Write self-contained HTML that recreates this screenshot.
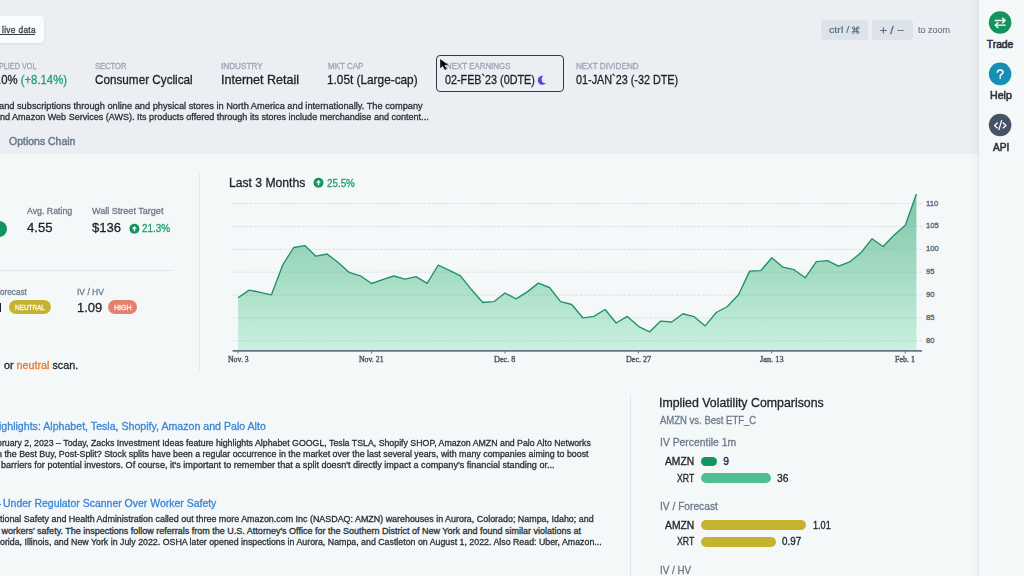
<!DOCTYPE html>
<html><head><meta charset='utf-8'><style>
html,body{margin:0;padding:0;width:1024px;height:576px;overflow:hidden;background:#f4f8f9;font-family:"Liberation Sans", sans-serif;}
div{-webkit-text-stroke:0.3px currentColor;}
body{position:relative;}
</style></head><body>

<div style='position:absolute;left:0;top:0;width:978px;height:153.8px;background:#ebeef2'></div>
<div style='position:absolute;left:978px;top:0;width:46px;height:576px;background:#f4f8f9;border-left:1.5px solid #e0e4e9;box-sizing:border-box;box-shadow:-4px 0 6px rgba(40,50,70,0.035)'></div>
<div style='position:absolute;left:-10px;top:16px;width:54px;height:26.6px;background:#fafbfc;border-radius:4px;box-shadow:0 1px 3px rgba(30,40,60,0.10)'></div>
<div style='position:absolute;left:0;top:34.0px;width:35.4px;height:0.8px;background:#3a3f47'></div>
<div style='position:absolute;left:436.25px;top:54.7px;width:127.65px;height:37.2px;border:1.7px solid #343a46;border-radius:4px;box-sizing:border-box'></div>
<div style='position:absolute;left:820.5px;top:20.2px;width:47.8px;height:19.7px;background:#dce3ea;border-radius:3.5px'></div>
<div style='position:absolute;left:872px;top:20.2px;width:40.8px;height:19.7px;background:#dce3ea;border-radius:3.5px'></div>
<div style='position:absolute;left:199px;top:174px;width:1px;height:196.4px;background:#e3e6ea'></div>
<div style='position:absolute;left:0;top:270.4px;width:173.7px;height:1px;background:#e3e7eb'></div>
<div style='position:absolute;left:630px;top:393.6px;width:1px;height:183px;background:#e3e6ea'></div>
<div style='position:absolute;left:-9.6px;top:220.6px;width:16.6px;height:16.6px;border-radius:50%;background:#13935f'></div>
<div style='position:absolute;left:0;top:503.6px;width:1.2px;height:1px;background:#3a86d5'></div>
<div style='position:absolute;left:0;top:302.6px;width:1.3px;height:9.3px;background:#1d2027'></div>
<div style='position:absolute;left:8.8px;top:300.1px;width:42.5px;height:14.4px;border-radius:8px;background:#c5b22f'></div>
<div style='position:absolute;left:108.1px;top:300.1px;width:29.4px;height:14.4px;border-radius:8px;background:#e5806e'></div>
<div style='position:absolute;left:701.3px;top:456.5px;width:16.1px;height:9.1px;border-radius:5px;background:#12945f'></div>
<div style='position:absolute;left:701.3px;top:473px;width:69.3px;height:9.7px;border-radius:5px;background:#4fbf93'></div>
<div style='position:absolute;left:701.2px;top:520.1px;width:104.9px;height:9.9px;border-radius:5px;background:#c5b22e'></div>
<div style='position:absolute;left:701.2px;top:536.8px;width:74.6px;height:10.1px;border-radius:5px;background:#c5b22e'></div>

<svg width='1024' height='576' style='position:absolute;left:0;top:0'>
<defs><linearGradient id='g' x1='0' y1='194' x2='0' y2='350.5' gradientUnits='userSpaceOnUse'>
<stop offset='0' stop-color='#7fc5a7'/><stop offset='1' stop-color='#c9f1df'/></linearGradient></defs>
<path d='M238.10,350.5 L238.10,297.80 L249.22,290.10 L260.34,292.30 L271.46,294.80 L282.58,265.20 L293.70,247.50 L304.82,245.60 L315.94,256.20 L327.06,254.00 L338.18,262.50 L349.30,272.40 L360.42,275.80 L371.54,283.50 L382.66,279.70 L393.78,276.00 L404.90,279.20 L416.02,276.70 L427.14,283.40 L438.26,265.00 L449.38,270.30 L460.50,275.80 L471.62,289.80 L482.74,302.50 L493.86,301.70 L504.98,293.00 L516.10,298.90 L527.22,291.90 L538.34,283.10 L549.46,287.50 L560.58,301.70 L571.70,304.50 L582.82,317.80 L593.94,316.40 L605.06,309.50 L616.18,323.00 L627.30,316.40 L638.42,326.30 L649.54,331.90 L660.66,321.10 L671.78,322.00 L682.90,313.75 L694.02,316.60 L705.14,325.90 L716.26,312.50 L727.38,306.50 L738.50,294.70 L749.62,271.10 L760.74,270.60 L771.86,257.80 L782.98,267.20 L794.10,269.70 L805.22,277.80 L816.34,261.70 L827.46,260.60 L838.58,266.10 L849.70,261.90 L860.82,252.80 L871.94,238.80 L883.06,246.50 L894.18,235.00 L905.30,225.30 L916.42,194.00 L916.42,350.5 Z' fill='url(#g)'/>
<g><line x1='232' x2='922' y1='203.60' y2='203.60' stroke='rgba(110,120,150,0.19)' stroke-width='1' stroke-dasharray='2.9 1.45'/><line x1='232' x2='922' y1='226.47' y2='226.47' stroke='rgba(110,120,150,0.19)' stroke-width='1' stroke-dasharray='2.9 1.45'/><line x1='232' x2='922' y1='249.34' y2='249.34' stroke='rgba(110,120,150,0.19)' stroke-width='1' stroke-dasharray='2.9 1.45'/><line x1='232' x2='922' y1='272.21' y2='272.21' stroke='rgba(110,120,150,0.19)' stroke-width='1' stroke-dasharray='2.9 1.45'/><line x1='232' x2='922' y1='295.08' y2='295.08' stroke='rgba(110,120,150,0.19)' stroke-width='1' stroke-dasharray='2.9 1.45'/><line x1='232' x2='922' y1='317.95' y2='317.95' stroke='rgba(110,120,150,0.19)' stroke-width='1' stroke-dasharray='2.9 1.45'/><line x1='232' x2='922' y1='340.82' y2='340.82' stroke='rgba(110,120,150,0.19)' stroke-width='1' stroke-dasharray='2.9 1.45'/></g>
<polyline points='238.10,297.80 249.22,290.10 260.34,292.30 271.46,294.80 282.58,265.20 293.70,247.50 304.82,245.60 315.94,256.20 327.06,254.00 338.18,262.50 349.30,272.40 360.42,275.80 371.54,283.50 382.66,279.70 393.78,276.00 404.90,279.20 416.02,276.70 427.14,283.40 438.26,265.00 449.38,270.30 460.50,275.80 471.62,289.80 482.74,302.50 493.86,301.70 504.98,293.00 516.10,298.90 527.22,291.90 538.34,283.10 549.46,287.50 560.58,301.70 571.70,304.50 582.82,317.80 593.94,316.40 605.06,309.50 616.18,323.00 627.30,316.40 638.42,326.30 649.54,331.90 660.66,321.10 671.78,322.00 682.90,313.75 694.02,316.60 705.14,325.90 716.26,312.50 727.38,306.50 738.50,294.70 749.62,271.10 760.74,270.60 771.86,257.80 782.98,267.20 794.10,269.70 805.22,277.80 816.34,261.70 827.46,260.60 838.58,266.10 849.70,261.90 860.82,252.80 871.94,238.80 883.06,246.50 894.18,235.00 905.30,225.30 916.42,194.00' fill='none' stroke='#1f9169' stroke-width='1.35' stroke-linejoin='round'/>
<line x1='232.5' x2='922' y1='350.9' y2='350.9' stroke='#6b7483' stroke-width='1.6'/>
<line x1='238.1' x2='238.1' y1='350' y2='353.5' stroke='#6b7483' stroke-width='1'/><line x1='371.6' x2='371.6' y1='350' y2='353.5' stroke='#6b7483' stroke-width='1'/><line x1='505.0' x2='505.0' y1='350' y2='353.5' stroke='#6b7483' stroke-width='1'/><line x1='638.3' x2='638.3' y1='350' y2='353.5' stroke='#6b7483' stroke-width='1'/><line x1='771.7' x2='771.7' y1='350' y2='353.5' stroke='#6b7483' stroke-width='1'/><line x1='905.3' x2='905.3' y1='350' y2='353.5' stroke='#6b7483' stroke-width='1'/>
</svg>

<svg width='1024' height='576' style='position:absolute;left:0;top:0'>
<defs><mask id='moon'><rect x='530' y='70' width='25' height='20' fill='#fff'/><circle cx='545.6' cy='79.2' r='3.9' fill='#000'/></mask></defs>
<path d='M854.50 27.80 V32.30 M856.70 27.80 V32.30 M853.35 28.95 H857.85 M853.35 31.15 H857.85' stroke='#5f6b7b' stroke-width='0.95' fill='none'/><circle cx='853.35' cy='27.80' r='1.15' stroke='#5f6b7b' stroke-width='0.95' fill='none'/><circle cx='853.35' cy='32.30' r='1.15' stroke='#5f6b7b' stroke-width='0.95' fill='none'/><circle cx='857.85' cy='27.80' r='1.15' stroke='#5f6b7b' stroke-width='0.95' fill='none'/><circle cx='857.85' cy='32.30' r='1.15' stroke='#5f6b7b' stroke-width='0.95' fill='none'/>
<circle cx='1000.1' cy='22.5' r='11.3' fill='#14935f'/>
<path d='M995.2 20.5 H1005.2 M1002.5 18.1 L1005.2 20.5 L1002.5 22.9' stroke='#fff' stroke-width='1.3' fill='none' stroke-linecap='round' stroke-linejoin='round'/>
<path d='M1005.2 25.2 H995.2 M997.9 22.8 L995.2 25.2 L997.9 27.6' stroke='#fff' stroke-width='1.3' fill='none' stroke-linecap='round' stroke-linejoin='round'/>
<circle cx='1000.1' cy='73.9' r='11.3' fill='#1590b2'/>
<path d='M997.4 72.2 C997.4 70.6 998.6 69.9 1000.2 69.9 C1001.9 69.9 1003.0 70.9 1003.0 72.2 C1003.0 73.7 1001.6 74.2 1000.8 74.9 C1000.3 75.3 1000.2 75.8 1000.2 76.4' stroke='#fff' stroke-width='1.5' fill='none' stroke-linecap='round'/>
<circle cx='1000.2' cy='78.1' r='0.85' fill='#fff'/>
<circle cx='1000.1' cy='125.0' r='11.3' fill='#465366'/>
<path d='M997.4 122.9 L994.5 125.4 L997.4 127.9 M1003.1 122.9 L1006.0 125.4 L1003.1 127.9 M1001.6 120.6 L998.9 129.6' stroke='#fff' stroke-width='1.3' fill='none' stroke-linecap='round' stroke-linejoin='round'/>
<circle cx='134.4' cy='228.7' r='5.0' fill='#12965f'/>
<path d='M132.0 228.7 L134.4 226.0 L136.8 228.7 Z' fill='#fff'/><rect x='133.7' y='228.2' width='1.4' height='3.0' fill='#fff'/>
<circle cx='318.5' cy='182.8' r='5.0' fill='#12965f'/>
<path d='M316.1 182.8 L318.5 180.1 L320.9 182.8 Z' fill='#fff'/><rect x='317.8' y='182.3' width='1.4' height='3.0' fill='#fff'/>
<circle cx='542.2' cy='80.3' r='4.45' fill='#5147e6' mask='url(#moon)'/>
</svg>

<div style='position:absolute;white-space:nowrap;font-family:"Liberation Sans", sans-serif;font-size:9.2px;font-weight:400;line-height:1;left:1.50px;top:26.00px;color:#353a42;transform:scaleX(0.9081);transform-origin:left top;-webkit-text-stroke:0.3px currentColor;letter-spacing:0.35px;'>live data</div><div style='position:absolute;white-space:nowrap;font-family:"Liberation Sans", sans-serif;font-size:9px;font-weight:400;line-height:1;left:-1.00px;top:62.00px;color:#9ca6b4;transform:scaleX(0.8043);transform-origin:left top;'>PLIED VOL</div><div style='position:absolute;white-space:nowrap;font-family:"Liberation Sans", sans-serif;font-size:9px;font-weight:400;line-height:1;left:94.90px;top:62.00px;color:#9ca6b4;transform:scaleX(0.8432);transform-origin:left top;'>SECTOR</div><div style='position:absolute;white-space:nowrap;font-family:"Liberation Sans", sans-serif;font-size:9px;font-weight:400;line-height:1;left:220.89px;top:62.00px;color:#9ca6b4;transform:scaleX(0.9111);transform-origin:left top;'>INDUSTRY</div><div style='position:absolute;white-space:nowrap;font-family:"Liberation Sans", sans-serif;font-size:9px;font-weight:400;line-height:1;left:327.70px;top:62.00px;color:#9ca6b4;transform:scaleX(0.8900);transform-origin:left top;'>MKT CAP</div><div style='position:absolute;white-space:nowrap;font-family:"Liberation Sans", sans-serif;font-size:9px;font-weight:400;line-height:1;left:446.40px;top:62.00px;color:#9ca6b4;transform:scaleX(0.8781);transform-origin:left top;'>NEXT EARNINGS</div><div style='position:absolute;white-space:nowrap;font-family:"Liberation Sans", sans-serif;font-size:9px;font-weight:400;line-height:1;left:575.90px;top:62.00px;color:#9ca6b4;transform:scaleX(0.9029);transform-origin:left top;'>NEXT DIVIDEND</div><div style='position:absolute;white-space:nowrap;font-family:"Liberation Sans", sans-serif;font-size:12.6px;font-weight:400;line-height:1;left:-2.10px;top:74.00px;color:#1d2027;transform:scaleX(0.9000);transform-origin:left top;'>.0% <span style="color:#1f9d6d">(+8.14%)</span></div><div style='position:absolute;white-space:nowrap;font-family:"Liberation Sans", sans-serif;font-size:12.6px;font-weight:400;line-height:1;left:94.90px;top:74.00px;color:#1d2027;transform:scaleX(0.9305);transform-origin:left top;'>Consumer Cyclical</div><div style='position:absolute;white-space:nowrap;font-family:"Liberation Sans", sans-serif;font-size:12.6px;font-weight:400;line-height:1;left:220.81px;top:74.00px;color:#1d2027;transform:scaleX(0.9948);transform-origin:left top;'>Internet Retail</div><div style='position:absolute;white-space:nowrap;font-family:"Liberation Sans", sans-serif;font-size:12.6px;font-weight:400;line-height:1;left:326.76px;top:74.00px;color:#1d2027;transform:scaleX(0.9379);transform-origin:left top;'>1.05t (Large-cap)</div><div style='position:absolute;white-space:nowrap;font-family:"Liberation Sans", sans-serif;font-size:12.6px;font-weight:400;line-height:1;left:445.20px;top:74.00px;color:#1d2027;transform:scaleX(0.8552);transform-origin:left top;'>02-FEB`23 (0DTE)</div><div style='position:absolute;white-space:nowrap;font-family:"Liberation Sans", sans-serif;font-size:12.6px;font-weight:400;line-height:1;left:575.60px;top:74.00px;color:#1d2027;transform:scaleX(0.8588);transform-origin:left top;'>01-JAN`23 (-32 DTE)</div><div style='position:absolute;white-space:nowrap;font-family:"Liberation Sans", sans-serif;font-size:9.3px;font-weight:400;line-height:1;left:-0.60px;top:102.00px;color:#2b3038;transform:scaleX(0.9946);transform-origin:left top;'>and subscriptions through online and physical stores in North America and internationally. The company</div><div style='position:absolute;white-space:nowrap;font-family:"Liberation Sans", sans-serif;font-size:9.3px;font-weight:400;line-height:1;left:0.00px;top:113.00px;color:#2b3038;transform:scaleX(0.9717);transform-origin:left top;'>nd Amazon Web Services (AWS). Its products offered through its stores include merchandise and content...</div><div style='position:absolute;white-space:nowrap;font-family:"Liberation Sans", sans-serif;font-size:10.9px;font-weight:400;line-height:1;left:8.80px;top:136.00px;color:#6b7a8e;transform:scaleX(0.9623);transform-origin:left top;-webkit-text-stroke:0.5px currentColor;'>Options Chain</div><div style='position:absolute;white-space:nowrap;font-family:"Liberation Sans", sans-serif;font-size:9.5px;font-weight:400;line-height:1;left:828.70px;top:25.00px;color:#5f6b7b;transform:scaleX(1.1278);transform-origin:left top;-webkit-text-stroke:0.2px currentColor;'>ctrl /</div><div style='position:absolute;white-space:nowrap;font-family:"Liberation Sans", sans-serif;font-size:10.5px;font-weight:400;line-height:1;left:880.40px;top:25.00px;color:#5f6b7b;transform:scaleX(1.1286);transform-origin:left top;'>+ / &minus;</div><div style='position:absolute;white-space:nowrap;font-family:"Liberation Sans", sans-serif;font-size:9.5px;font-weight:400;line-height:1;left:917.50px;top:25.00px;color:#6b7686;transform:scaleX(0.9471);transform-origin:left top;-webkit-text-stroke:0.15px currentColor;'>to zoom</div><div style='position:absolute;white-space:nowrap;font-family:"Liberation Sans", sans-serif;font-size:10.3px;font-weight:400;line-height:1;left:986.80px;top:40.00px;color:#2c333d;-webkit-text-stroke:0.55px currentColor;'>Trade</div><div style='position:absolute;white-space:nowrap;font-family:"Liberation Sans", sans-serif;font-size:10.3px;font-weight:400;line-height:1;left:989.50px;top:91.00px;color:#2c333d;transform:scaleX(1.0333);transform-origin:left top;-webkit-text-stroke:0.55px currentColor;'>Help</div><div style='position:absolute;white-space:nowrap;font-family:"Liberation Sans", sans-serif;font-size:10.3px;font-weight:400;line-height:1;left:992.50px;top:143.00px;color:#2c333d;transform:scaleX(0.9875);transform-origin:left top;-webkit-text-stroke:0.55px currentColor;'>API</div><div style='position:absolute;white-space:nowrap;font-family:"Liberation Sans", sans-serif;font-size:9.2px;font-weight:400;line-height:1;left:27.20px;top:207.00px;color:#6c798b;transform:scaleX(0.9553);transform-origin:left top;'>Avg. Rating</div><div style='position:absolute;white-space:nowrap;font-family:"Liberation Sans", sans-serif;font-size:9.2px;font-weight:400;line-height:1;left:91.90px;top:207.00px;color:#6c798b;transform:scaleX(0.9849);transform-origin:left top;'>Wall Street Target</div><div style='position:absolute;white-space:nowrap;font-family:"Liberation Sans", sans-serif;font-size:12.6px;font-weight:400;line-height:1;left:27.20px;top:222.00px;color:#1d2027;transform:scaleX(1.0417);transform-origin:left top;'>4.55</div><div style='position:absolute;white-space:nowrap;font-family:"Liberation Sans", sans-serif;font-size:12.6px;font-weight:400;line-height:1;left:91.90px;top:222.00px;color:#1d2027;transform:scaleX(1.0357);transform-origin:left top;'>$136</div><div style='position:absolute;white-space:nowrap;font-family:"Liberation Sans", sans-serif;font-size:10px;font-weight:400;line-height:1;left:142.40px;top:224.00px;color:#1f9d6d;transform:scaleX(0.9929);transform-origin:left top;'>21.3%</div><div style='position:absolute;white-space:nowrap;font-family:"Liberation Sans", sans-serif;font-size:9.2px;font-weight:400;line-height:1;left:0.00px;top:288.00px;color:#6c798b;transform:scaleX(0.8900);transform-origin:left top;'>orecast</div><div style='position:absolute;white-space:nowrap;font-family:"Liberation Sans", sans-serif;font-size:9.2px;font-weight:400;line-height:1;left:77.08px;top:288.00px;color:#6c798b;transform:scaleX(0.9250);transform-origin:left top;'>IV / HV</div><div style='position:absolute;white-space:nowrap;font-family:"Liberation Sans", sans-serif;font-size:12.8px;font-weight:400;line-height:1;left:76.78px;top:302.00px;color:#1d2027;transform:scaleX(1.0167);transform-origin:left top;'>1.09</div><div style='position:absolute;white-space:nowrap;font-family:"Liberation Sans", sans-serif;font-size:7.6px;font-weight:400;line-height:1;left:15.00px;top:304.00px;color:#fbf8e6;transform:scaleX(0.8444);transform-origin:left top;-webkit-text-stroke:0.35px currentColor;'>NEUTRAL</div><div style='position:absolute;white-space:nowrap;font-family:"Liberation Sans", sans-serif;font-size:7.6px;font-weight:400;line-height:1;left:113.90px;top:304.00px;color:#fff1ec;transform:scaleX(0.9263);transform-origin:left top;-webkit-text-stroke:0.35px currentColor;'>HIGH</div><div style='position:absolute;white-space:nowrap;font-family:"Liberation Sans", sans-serif;font-size:10.5px;font-weight:400;line-height:1;left:3.50px;top:360.00px;color:#1d2027;transform:scaleX(1.0250);transform-origin:left top;'>or <span style="color:#ec7a28">neutral</span> scan.</div><div style='position:absolute;white-space:nowrap;font-family:"Liberation Sans", sans-serif;font-size:12.3px;font-weight:400;line-height:1;left:228.51px;top:177.00px;color:#1f2329;transform:scaleX(0.9882);transform-origin:left top;'>Last 3 Months</div><div style='position:absolute;white-space:nowrap;font-family:"Liberation Sans", sans-serif;font-size:10px;font-weight:400;line-height:1;left:326.50px;top:179.00px;color:#1f9d6d;transform:scaleX(0.9821);transform-origin:left top;'>25.5%</div><div style='position:absolute;white-space:nowrap;font-family:"Liberation Sans", sans-serif;font-size:7.6px;font-weight:400;line-height:1;left:926.10px;top:200.00px;color:#566070;'>110</div><div style='position:absolute;white-space:nowrap;font-family:"Liberation Sans", sans-serif;font-size:7.6px;font-weight:400;line-height:1;left:926.10px;top:222.00px;color:#566070;'>105</div><div style='position:absolute;white-space:nowrap;font-family:"Liberation Sans", sans-serif;font-size:7.6px;font-weight:400;line-height:1;left:926.10px;top:245.00px;color:#566070;'>100</div><div style='position:absolute;white-space:nowrap;font-family:"Liberation Sans", sans-serif;font-size:7.6px;font-weight:400;line-height:1;left:926.10px;top:268.00px;color:#566070;'>95</div><div style='position:absolute;white-space:nowrap;font-family:"Liberation Sans", sans-serif;font-size:7.6px;font-weight:400;line-height:1;left:926.10px;top:291.00px;color:#566070;'>90</div><div style='position:absolute;white-space:nowrap;font-family:"Liberation Sans", sans-serif;font-size:7.6px;font-weight:400;line-height:1;left:926.10px;top:314.00px;color:#566070;'>85</div><div style='position:absolute;white-space:nowrap;font-family:"Liberation Sans", sans-serif;font-size:7.6px;font-weight:400;line-height:1;left:926.10px;top:337.00px;color:#566070;'>80</div><div style='position:absolute;white-space:nowrap;font-family:"Liberation Serif", serif;font-size:8.6px;font-weight:400;line-height:1;left:227.90px;top:355.00px;color:#525b68;transform:scaleX(0.9043);transform-origin:left top;-webkit-text-stroke:0.45px currentColor;'>Nov. 3</div><div style='position:absolute;white-space:nowrap;font-family:"Liberation Serif", serif;font-size:8.6px;font-weight:400;line-height:1;left:359.40px;top:355.00px;color:#525b68;transform:scaleX(0.9037);transform-origin:left top;-webkit-text-stroke:0.45px currentColor;'>Nov. 21</div><div style='position:absolute;white-space:nowrap;font-family:"Liberation Serif", serif;font-size:8.6px;font-weight:400;line-height:1;left:493.90px;top:355.00px;color:#525b68;transform:scaleX(0.9565);transform-origin:left top;-webkit-text-stroke:0.45px currentColor;'>Dec. 8</div><div style='position:absolute;white-space:nowrap;font-family:"Liberation Serif", serif;font-size:8.6px;font-weight:400;line-height:1;left:625.60px;top:355.00px;color:#525b68;transform:scaleX(0.9407);transform-origin:left top;-webkit-text-stroke:0.45px currentColor;'>Dec. 27</div><div style='position:absolute;white-space:nowrap;font-family:"Liberation Serif", serif;font-size:8.6px;font-weight:400;line-height:1;left:760.00px;top:355.00px;color:#525b68;transform:scaleX(0.9667);transform-origin:left top;-webkit-text-stroke:0.45px currentColor;'>Jan. 13</div><div style='position:absolute;white-space:nowrap;font-family:"Liberation Serif", serif;font-size:8.6px;font-weight:400;line-height:1;left:895.20px;top:355.00px;color:#525b68;transform:scaleX(0.9286);transform-origin:left top;-webkit-text-stroke:0.45px currentColor;'>Feb. 1</div><div style='position:absolute;white-space:nowrap;font-family:"Liberation Sans", sans-serif;font-size:10.4px;font-weight:400;line-height:1;left:-0.60px;top:422.00px;color:#3a86d5;transform:scaleX(1.0211);transform-origin:left top;'>ighlights: Alphabet, Tesla, Shopify, Amazon and Palo Alto</div><div style='position:absolute;white-space:nowrap;font-family:"Liberation Sans", sans-serif;font-size:9.0px;font-weight:400;line-height:1;left:-3.30px;top:439.00px;color:#2b3038;transform:scaleX(0.9759);transform-origin:left top;'>bruary 2, 2023 &ndash; Today, Zacks Investment Ideas feature highlights Alphabet GOOGL, Tesla TSLA, Shopify SHOP, Amazon AMZN and Palo Alto Networks</div><div style='position:absolute;white-space:nowrap;font-family:"Liberation Sans", sans-serif;font-size:9.0px;font-weight:400;line-height:1;left:-2.60px;top:450.00px;color:#2b3038;transform:scaleX(0.9841);transform-origin:left top;'>n the Best Buy, Post-Split? Stock splits have been a regular occurrence in the market over the last several years, with many companies aiming to boost</div><div style='position:absolute;white-space:nowrap;font-family:"Liberation Sans", sans-serif;font-size:9.0px;font-weight:400;line-height:1;left:0.60px;top:461.00px;color:#2b3038;transform:scaleX(1.0084);transform-origin:left top;'>barriers for potential investors. Of course, it's important to remember that a split doesn't directly impact a company's financial standing or...</div><div style='position:absolute;white-space:nowrap;font-family:"Liberation Sans", sans-serif;font-size:10.4px;font-weight:400;line-height:1;left:3.00px;top:499.00px;color:#3a86d5;transform:scaleX(1.0075);transform-origin:left top;'>Under Regulator Scanner Over Worker Safety</div><div style='position:absolute;white-space:nowrap;font-family:"Liberation Sans", sans-serif;font-size:9.0px;font-weight:400;line-height:1;left:0.40px;top:515.00px;color:#2b3038;transform:scaleX(0.9897);transform-origin:left top;'>tional Safety and Health Administration called out three more Amazon.com Inc (NASDAQ: AMZN) warehouses in Aurora, Colorado; Nampa, Idaho; and</div><div style='position:absolute;white-space:nowrap;font-family:"Liberation Sans", sans-serif;font-size:9.0px;font-weight:400;line-height:1;left:1.40px;top:527.00px;color:#2b3038;'>workers' safety. The inspections follow referrals from the U.S. Attorney's Office for the Southern District of New York and found similar violations at</div><div style='position:absolute;white-space:nowrap;font-family:"Liberation Sans", sans-serif;font-size:9.0px;font-weight:400;line-height:1;left:-0.40px;top:538.00px;color:#2b3038;transform:scaleX(0.9793);transform-origin:left top;'>orida, Illinois, and New York in July 2022. OSHA later opened inspections in Aurora, Nampa, and Castleton on August 1, 2022. Also Read: Uber, Amazon...</div><div style='position:absolute;white-space:nowrap;font-family:"Liberation Sans", sans-serif;font-size:12.5px;font-weight:400;line-height:1;left:659.41px;top:397.00px;color:#1f2329;transform:scaleX(0.9880);transform-origin:left top;'>Implied Volatility Comparisons</div><div style='position:absolute;white-space:nowrap;font-family:"Liberation Sans", sans-serif;font-size:10.6px;font-weight:400;line-height:1;left:660.40px;top:415.00px;color:#6c798b;transform:scaleX(0.8981);transform-origin:left top;'>AMZN vs. Best ETF_C</div><div style='position:absolute;white-space:nowrap;font-family:"Liberation Sans", sans-serif;font-size:10.6px;font-weight:400;line-height:1;left:660.22px;top:437.00px;color:#6c798b;transform:scaleX(0.9792);transform-origin:left top;'>IV Percentile 1m</div><div style='position:absolute;white-space:nowrap;font-family:"Liberation Sans", sans-serif;font-size:10.2px;font-weight:400;line-height:1;left:665.40px;top:457.00px;color:#1d2027;transform:scaleX(1.0107);transform-origin:left top;'>AMZN</div><div style='position:absolute;white-space:nowrap;font-family:"Liberation Sans", sans-serif;font-size:10.2px;font-weight:400;line-height:1;left:723.20px;top:457.00px;color:#1d2027;'>9</div><div style='position:absolute;white-space:nowrap;font-family:"Liberation Sans", sans-serif;font-size:10.2px;font-weight:400;line-height:1;left:676.60px;top:474.00px;color:#1d2027;transform:scaleX(0.8550);transform-origin:left top;'>XRT</div><div style='position:absolute;white-space:nowrap;font-family:"Liberation Sans", sans-serif;font-size:10.2px;font-weight:400;line-height:1;left:776.50px;top:474.00px;color:#1d2027;transform:scaleX(1.0091);transform-origin:left top;'>36</div><div style='position:absolute;white-space:nowrap;font-family:"Liberation Sans", sans-serif;font-size:10.6px;font-weight:400;line-height:1;left:660.24px;top:501.00px;color:#6c798b;transform:scaleX(0.9627);transform-origin:left top;'>IV / Forecast</div><div style='position:absolute;white-space:nowrap;font-family:"Liberation Sans", sans-serif;font-size:10.2px;font-weight:400;line-height:1;left:665.30px;top:521.00px;color:#1d2027;transform:scaleX(1.0143);transform-origin:left top;'>AMZN</div><div style='position:absolute;white-space:nowrap;font-family:"Liberation Sans", sans-serif;font-size:10.2px;font-weight:400;line-height:1;left:812.90px;top:521.00px;color:#1d2027;transform:scaleX(0.8950);transform-origin:left top;'>1.01</div><div style='position:absolute;white-space:nowrap;font-family:"Liberation Sans", sans-serif;font-size:10.2px;font-weight:400;line-height:1;left:676.60px;top:537.00px;color:#1d2027;transform:scaleX(0.8550);transform-origin:left top;'>XRT</div><div style='position:absolute;white-space:nowrap;font-family:"Liberation Sans", sans-serif;font-size:10.2px;font-weight:400;line-height:1;left:781.80px;top:537.00px;color:#1d2027;transform:scaleX(0.9650);transform-origin:left top;'>0.97</div><div style='position:absolute;white-space:nowrap;font-family:"Liberation Sans", sans-serif;font-size:10.6px;font-weight:400;line-height:1;left:660.27px;top:565.00px;color:#6c798b;transform:scaleX(0.9273);transform-origin:left top;'>IV / HV</div>
<svg width='1024' height='576' style='position:absolute;left:0;top:0'><path d='M440.2 58.9 L440.2 68.2 L442.7 66.0 L444.9 70.0 L446.7 69.0 L444.5 65.3 L448.0 64.7 Z' fill='#0b0b0b'/></svg>
</body></html>
